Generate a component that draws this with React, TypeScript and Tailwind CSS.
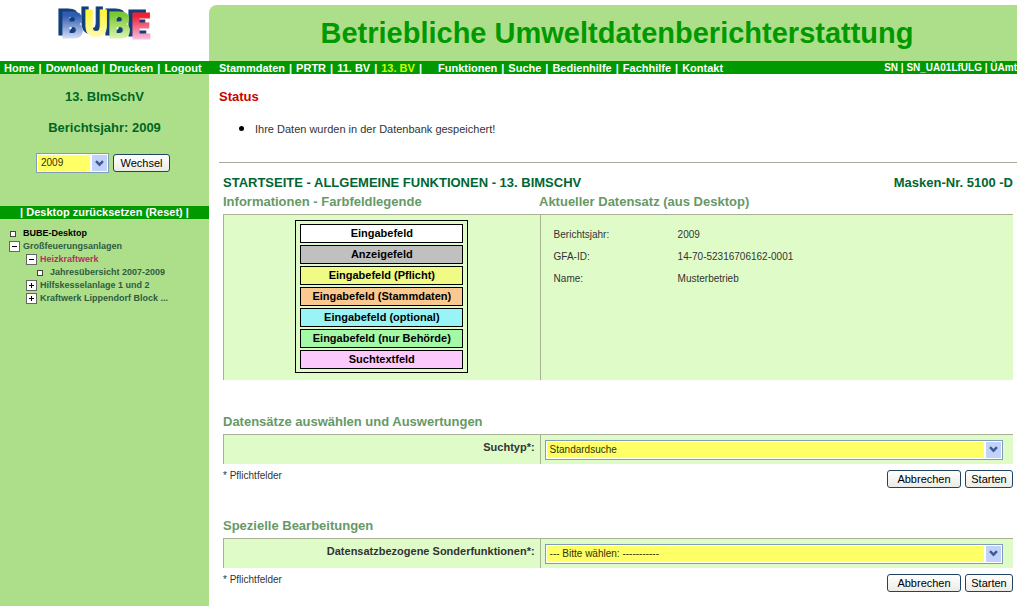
import React, { useState } from 'react';

const legend = [
  { label: 'Eingabefeld', color: 'bg-white' },
  { label: 'Anzeigefeld', color: 'bg-[#c0c0c0]' },
  { label: 'Eingabefeld (Pflicht)', color: 'bg-[#f0fb85]' },
  { label: 'Eingabefeld (Stammdaten)', color: 'bg-[#fbc88f]' },
  { label: 'Eingabefeld (optional)', color: 'bg-[#99f5f5]' },
  { label: 'Eingabefeld (nur Behörde)', color: 'bg-[#a3f9a5]' },
  { label: 'Suchtextfeld', color: 'bg-[#fcc9fc]' },
];

const record = [
  { label: 'Berichtsjahr:', value: '2009' },
  { label: 'GFA-ID:', value: '14-70-52316706162-0001' },
  { label: 'Name:', value: 'Musterbetrieb' },
];

const logoLetters = [
  { char: 'B', x: 4, y: 38, fill: 'url(#logo-blue)' },
  { char: 'U', x: 27, y: 36, fill: 'url(#logo-yellow)' },
  { char: 'B', x: 51, y: 38, fill: 'url(#logo-green)' },
  { char: 'E', x: 74, y: 39, fill: 'url(#logo-red)' },
];

const Logo: React.FC = () => (
  <svg
    width="100"
    height="54"
    viewBox="0 0 100 54"
    fontFamily="'Liberation Sans Narrow', 'Arial Narrow', 'DejaVu Sans Condensed', sans-serif"
    fontWeight="bold"
    fontSize="36"
    className="drop-shadow-[-4px_-3px_0_#123f7c]"
  >
    <defs>
      <linearGradient id="logo-blue" x1="0" y1="0" x2="0" y2="1">
        <stop offset="0.25" stopColor="#2f5cb0" />
        <stop offset="0.85" stopColor="#dfe6fb" />
      </linearGradient>
      <linearGradient id="logo-yellow" x1="0" y1="0" x2="0" y2="1">
        <stop offset="0.25" stopColor="#fff53a" />
        <stop offset="0.85" stopColor="#fffbb8" />
      </linearGradient>
      <linearGradient id="logo-green" x1="0" y1="0" x2="0" y2="1">
        <stop offset="0.25" stopColor="#7cc832" />
        <stop offset="0.85" stopColor="#e4f7b8" />
      </linearGradient>
      <linearGradient id="logo-red" x1="0" y1="0" x2="0" y2="1">
        <stop offset="0.25" stopColor="#ee2233" />
        <stop offset="0.85" stopColor="#fbc9f0" />
      </linearGradient>
    </defs>
    {logoLetters.map((l) => (
      <text key={l.x} x={l.x} y={l.y} fill={l.fill} stroke={l.fill} strokeWidth="1">
        {l.char}
      </text>
    ))}
  </svg>
);

type SelectBoxProps = {
  id: string;
  options: string[];
  label?: string;
};

const SelectBox: React.FC<SelectBoxProps> = ({ id, options, label }) => {
  const [value, setValue] = useState(options[0]);

  return (
    <div className="relative w-full border border-[#7f9db9] bg-white p-px">
      <select
        id={id}
        aria-label={label}
        value={value}
        onChange={(e) => setValue(e.target.value)}
        className="block h-4 w-full appearance-none bg-[#ffff66] pl-[3px] pr-5 text-[10px] leading-4 text-[#333300]"
      >
        {options.map((o) => (
          <option key={o}>{o}</option>
        ))}
      </select>
      <span className="pointer-events-none absolute inset-y-0 right-0 flex w-[18px] items-center justify-center border-2 border-y border-r border-white bg-[#c1d3fb]">
        <svg width="9" height="7" viewBox="0 0 9 7" fill="none" stroke="#3f5a92" strokeWidth="2.4">
          <path d="M1 1.2 L4.5 4.7 L8 1.2" />
        </svg>
      </span>
    </div>
  );
};

const Button: React.FC<{ children: React.ReactNode; className: string }> = ({ children, className }) => (
  <button
    type="button"
    className={`h-[18px] rounded-[3px] border border-[#1f4464] bg-linear-to-b from-white to-[#ecebe5] text-[11px] leading-4 text-black ${className}`}
  >
    {children}
  </button>
);

const NavLink: React.FC<{ children: string; active?: boolean }> = ({ children, active }) => (
  <a href="#" className={active ? 'text-[#ccff00]' : 'text-white'}>
    {children}
  </a>
);

const TreeIcon: React.FC<{ type: 'plus' | 'minus' | 'leaf' }> = ({ type }) => {
  if (type === 'leaf') {
    return (
      <span className="flex w-[11px] shrink-0 justify-start pl-px">
        <span className="size-1.5 border border-[#444] bg-white" />
      </span>
    );
  }
  return (
    <svg width="11" height="11" viewBox="0 0 11 11" className="shrink-0" shapeRendering="crispEdges">
      <rect x="0.5" y="0.5" width="10" height="10" fill="#fff" stroke="#666" />
      <rect x="3" y="5" width="5" height="1" fill="#000" />
      {type === 'plus' && <rect x="5" y="3" width="1" height="5" fill="#000" />}
    </svg>
  );
};

const FormSection: React.FC<{ id: string; title: string; label: string; options: string[] }> = ({
  id,
  title,
  label,
  options,
}) => (
  <form className="pr-1">
    <h3 className="text-[13px] leading-4 font-bold text-[#669966]">{title}</h3>
    <div className="mt-1 flex h-[30px] border-t border-l border-[#a9b294] bg-[#dffcc8]">
      <label htmlFor={id} className="w-2/5 pt-1 pr-[5px] text-right text-[11px] leading-4 font-bold text-[#333]">
        {label}
      </label>
      <div className="flex flex-1 items-center border-l border-[#a9b294] pr-2.5 pl-1">
        <SelectBox id={id} options={options} />
      </div>
    </div>
    <div className="mt-1.5 flex justify-between">
      <span className="text-[10px] leading-3 text-[#333]">* Pflichtfelder</span>
      <div className="flex gap-1">
        <Button className="w-[74px]">Abbrechen</Button>
        <Button className="w-12">Starten</Button>
      </div>
    </div>
  </form>
);

const App: React.FC = () => {
  return (
    <div className="flex min-h-screen flex-col bg-white font-['Liberation_Sans',Arial,sans-serif]">
      <header className="pr-[7px]">
        <div className="flex h-[61px]">
          <div className="w-[209px] shrink-0 pl-14">
            <Logo />
          </div>
          <div className="mt-[5px] flex flex-1 items-center justify-center rounded-tl-lg bg-[#addf8a] pl-2">
            <h1 className="text-[29px] leading-8 font-bold text-[#009900]">
              Betriebliche Umweltdatenberichterstattung
            </h1>
          </div>
        </div>
        <nav className="flex h-[13px] items-center bg-[#009900] text-[11px] leading-3 font-bold whitespace-nowrap text-white">
          <div className="flex w-[219px] shrink-0 gap-1 pl-1">
            <NavLink>Home</NavLink>|<NavLink>Download</NavLink>|<NavLink>Drucken</NavLink>|
            <NavLink>Logout</NavLink>
          </div>
          <div className="flex gap-1">
            <NavLink>Stammdaten</NavLink>|<NavLink>PRTR</NavLink>|<NavLink>11. BV</NavLink>|
            <NavLink active>13. BV</NavLink>|
          </div>
          <div className="ml-4 flex gap-1">
            <NavLink>Funktionen</NavLink>|<NavLink>Suche</NavLink>|<NavLink>Bedienhilfe</NavLink>|
            <NavLink>Fachhilfe</NavLink>|<NavLink>Kontakt</NavLink>
          </div>
          <div className="ml-auto text-[10px]">SN | SN_UA01LfULG | ÜAmt</div>
        </nav>
      </header>

      <div className="flex flex-1">
        <aside className="w-[209px] shrink-0 bg-[#addf8a] pt-[15px]">
          <div className="text-center text-[13px] leading-4 font-bold text-[#006622]">
            <p>13. BImSchV</p>
            <p className="mt-[15px]">Berichtsjahr: 2009</p>
          </div>
          <form className="mt-[17px] flex items-center gap-1 pl-9">
            <div className="w-[73px]">
              <SelectBox id="jahr" label="Berichtsjahr" options={['2009', '2008', '2007']} />
            </div>
            <Button className="w-[57px]">Wechsel</Button>
          </form>
          <div className="mt-[33px] bg-[#009900] text-center text-[11px] leading-[13px] font-bold text-white">
            | <a href="#">Desktop zurücksetzen (Reset)</a> |
          </div>
          <ul className="mt-2 text-[9px] leading-[13px] font-bold whitespace-nowrap text-[#2f5c3f]">
            <li className="flex items-center gap-[3px] pl-[9px] text-black">
              <TreeIcon type="leaf" />
              <a href="#">BUBE-Desktop</a>
            </li>
            <li>
              <div className="flex items-center gap-[3px] pl-[9px]">
                <TreeIcon type="minus" />
                <a href="#">Großfeuerungsanlagen</a>
              </div>
              <ul>
                <li>
                  <div className="flex items-center gap-[3px] pl-[26px] text-[#b5305c]">
                    <TreeIcon type="minus" />
                    <a href="#">Heizkraftwerk</a>
                  </div>
                  <ul>
                    <li className="flex items-center gap-[3px] pl-9">
                      <TreeIcon type="leaf" />
                      <a href="#">Jahresübersicht 2007-2009</a>
                    </li>
                  </ul>
                </li>
                <li className="flex items-center gap-[3px] pl-[26px]">
                  <TreeIcon type="plus" />
                  <a href="#">Hilfskesselanlage 1 und 2</a>
                </li>
                <li className="flex items-center gap-[3px] pl-[26px]">
                  <TreeIcon type="plus" />
                  <a href="#">Kraftwerk Lippendorf Block ...</a>
                </li>
              </ul>
            </li>
          </ul>
        </aside>

        <main className="flex-1 pt-[15px] pr-[7px] pl-2.5">
          <h2 className="text-[13px] leading-4 font-bold text-[#cc0000]">Status</h2>
          <ul className="mt-[15px] list-disc pl-9 text-[11px] leading-4 text-[#333] marker:text-[15px] marker:text-black">
            <li>Ihre Daten wurden in der Datenbank gespeichert!</li>
          </ul>
          <hr className="mt-[25px] border-[#aca899]" />

          <div className="pt-3 pl-1">
            <div className="flex justify-between pr-1 text-[13px] leading-4 font-bold text-[#006633]">
              <h2>STARTSEITE - ALLGEMEINE FUNKTIONEN - 13. BIMSCHV</h2>
              <p>Masken-Nr. 5100 -D</p>
            </div>

            <div className="mr-1 mt-[3px] flex text-[13px] leading-4 font-bold text-[#669966]">
              <h3 className="w-2/5">Informationen - Farbfeldlegende</h3>
              <h3>Aktueller Datensatz (aus Desktop)</h3>
            </div>
            <div className="mr-1 mt-1 flex border-t border-l border-[#a9b294] bg-[#dffcc8]">
              <div className="flex w-2/5 justify-center pt-[5px] pb-[7px]">
                <ul className="flex w-[173px] flex-col gap-0.5 border border-black px-1 py-[3px]">
                  {legend.map((l) => (
                    <li
                      key={l.label}
                      className={`border border-black text-center text-[11px] leading-[17px] font-bold text-black ${l.color}`}
                    >
                      {l.label}
                    </li>
                  ))}
                </ul>
              </div>
              <div className="flex-1 border-l border-[#a9b294] pt-[9px] pl-[13px]">
                <table className="text-left text-[10px] leading-[22px] text-[#333]">
                  <tbody>
                    {record.map((r) => (
                      <tr key={r.label}>
                        <th scope="row" className="w-[124px] font-normal">
                          {r.label}
                        </th>
                        <td>{r.value}</td>
                      </tr>
                    ))}
                  </tbody>
                </table>
              </div>
            </div>

            <div className="mt-[34px] flex flex-col gap-[30px]">
              <FormSection
                id="suchtyp"
                title="Datensätze auswählen und Auswertungen"
                label="Suchtyp*:"
                options={['Standardsuche']}
              />
              <FormSection
                id="sonderfunktionen"
                title="Spezielle Bearbeitungen"
                label="Datensatzbezogene Sonderfunktionen*:"
                options={['--- Bitte wählen: -----------']}
              />
            </div>
          </div>
        </main>
      </div>
    </div>
  );
};

export default App;
